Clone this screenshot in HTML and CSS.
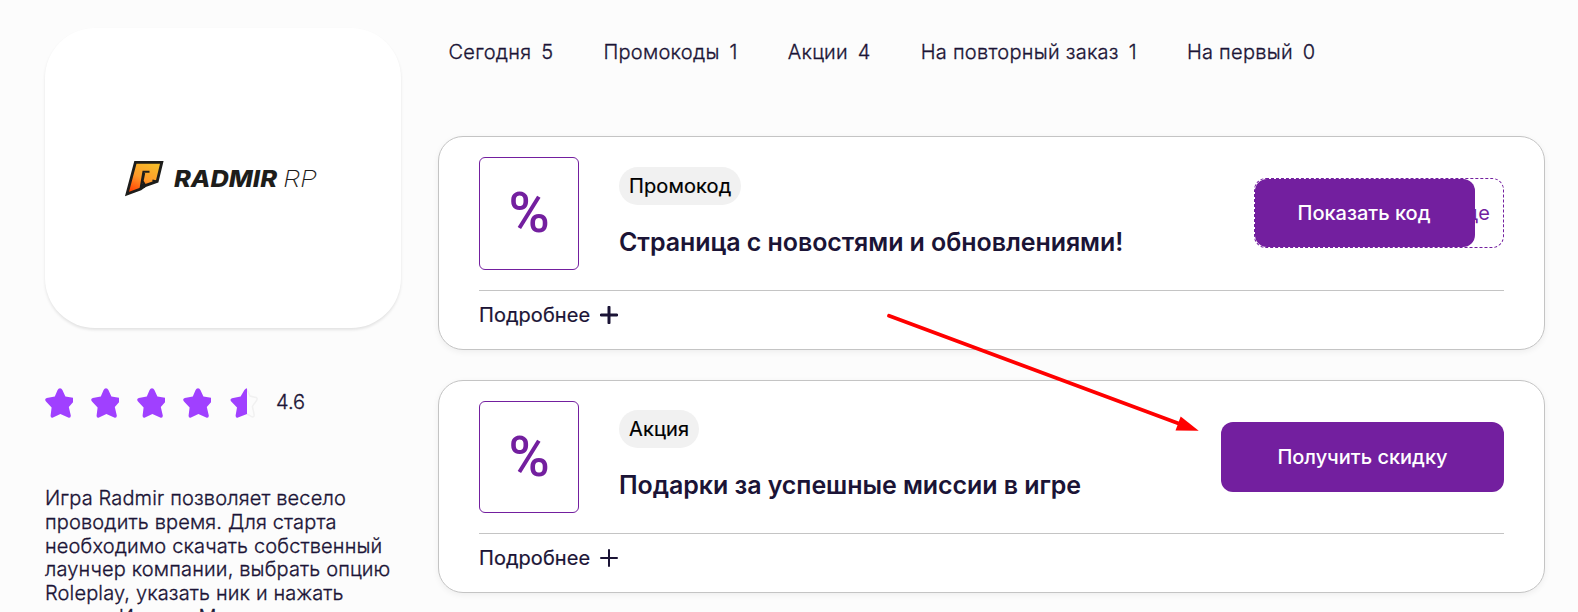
FILE: index.html
```html
<!DOCTYPE html>
<html lang="ru">
<head>
  <meta charset="UTF-8" />
  <meta name="viewport" content="width=device-width, initial-scale=1" />
  <title>Radmir RP</title>
  <link rel="stylesheet" href="styles.css">
</head>
<body>
  <svg class="sprite" width="0" height="0">
    <symbol id="star" viewBox="0 0 28 30">
      <path d="M15 .2 Q16.6 .2 17.4 1.9 L20.4 8.4 L28 9.8 Q31 10.8 29 13.2 L23.8 19 L25.8 27.4 Q26 30.4 23.2 29.6 L15.4 26 L8 29.6 Q5.4 30.4 5.6 27.4 L6.6 19.6 L1 13.4 Q-1 11 1.8 10 L9.8 8.4 L12.6 1.9 Q13.4 .2 15 .2 Z" />
    </symbol>
  </svg>

  <div class="page">
    <aside class="sidebar">
      <div class="shop-logo">
        <svg width="194" height="38" viewBox="124 160 194 38">
          <defs>
            <linearGradient id="gold" x1="0.7" y1="0" x2="0.2" y2="1">
              <stop offset="0" stop-color="#f6bd2a" />
              <stop offset="0.5" stop-color="#ff9a2a" />
              <stop offset="1" stop-color="#ff3c00" />
            </linearGradient>
          </defs>
          <path d="M135.4 162.4 H161.8 L157.2 181.4 L145.2 185.6 L140.5 189 L127 194 Z" fill="url(#gold)" stroke="#1d1d1b" stroke-width="2.8" />
          <path d="M149.5 171.7 H143.4 L140.6 188.2 L143 184.6 L145 187.4 M144.2 173 L142.6 181 L145.8 186.2 M152.4 180.6 L156.8 181.6" fill="none" stroke="#1d1d1b" stroke-width="2" />
          <text class="logo-bold" x="174" y="187" textLength="103" lengthAdjust="spacingAndGlyphs">RADMIR</text>
          <text class="logo-thin" x="283" y="187" textLength="34" lengthAdjust="spacingAndGlyphs">RP</text>
        </svg>
      </div>

      <div class="rating">
        <svg class="star"><use href="#star" /></svg>
        <svg class="star"><use href="#star" /></svg>
        <svg class="star"><use href="#star" /></svg>
        <svg class="star"><use href="#star" /></svg>
        <svg class="star star-half" viewBox="0 0 28 30">
          <path class="star-empty" d="M17 1.5 L20 8 L26 9.4 Q27.8 10.4 26.6 12.4 L22.4 18.4 L24.2 27 Q24.2 29.4 22 28.8 L17 26" />
          <path d="M17 .2 Q15.8 .2 14.4 2 L10.6 8.4 L2 10.2 Q-.4 11 1 13.2 L7 19.4 L5.6 27.4 Q5.6 30.4 8 29.6 L17 26 Z" />
        </svg>
        <span class="rating-value">4.6</span>
      </div>

      <p class="about">Игра Radmir позволяет весело проводить время. Для старта необходимо скачать собственный лаунчер компании, выбрать опцию Roleplay, указать ник и нажать кнопку Играть. Можно</p>
    </aside>

    <main class="content">
      <nav class="tabs">
        <a>Сегодня <span>5</span></a>
        <a>Промокоды <span>1</span></a>
        <a>Акции <span>4</span></a>
        <a>На повторный заказ <span>1</span></a>
        <a>На первый <span>0</span></a>
      </nav>

      <article class="offer">
        <div class="offer-main">
          <div class="percent">%</div>
          <div class="offer-info">
            <span class="tag">Промокод</span>
            <h2>Страница с новостями и обновлениями!</h2>
          </div>
          <div class="code-box">
            <span class="code">где</span>
            <button class="btn btn-code">Показать код</button>
          </div>
        </div>
        <div class="more">
          <span>Подробнее</span>
          <svg class="plus plus-bold" viewBox="0 0 18 18"><path d="M9 1.2V16.8M1.2 9H16.8" /></svg>
        </div>
      </article>

      <article class="offer">
        <div class="offer-main">
          <div class="percent">%</div>
          <div class="offer-info">
            <span class="tag">Акция</span>
            <h2>Подарки за успешные миссии в игре</h2>
          </div>
          <button class="btn btn-deal">Получить скидку</button>
        </div>
        <div class="more">
          <span>Подробнее</span>
          <svg class="plus" viewBox="0 0 18 18"><path d="M9 1V17M1 9H17" /></svg>
        </div>
      </article>
    </main>
  </div>

  <svg class="arrow" width="320" height="124" viewBox="884 311 320 124">
    <path d="M889 315.8 L1180 424" stroke="#f00" stroke-width="3.8" stroke-linecap="round" />
    <path d="M1198.7 430.8 L1180.7 416.5 L1175.5 430.5 Z" fill="#f00" />
  </svg>
</body>
</html>
```

FILE: styles.css
```css
* {
  box-sizing: border-box;
}

body {
  margin: 0;
  height: 612px;
  overflow: hidden;
  background: #fcfcfc;
  color: #1b1436;
  font-family: Inter, "Noto Sans", sans-serif;
  font-size: 20px;
  line-height: 24px;
}

.sprite {
  position: absolute;
}

.page {
  display: flex;
  gap: 37px;
  padding: 28px 33px 0 45px;
}

.sidebar {
  width: 356px;
  flex-shrink: 0;
}

.shop-logo {
  display: flex;
  align-items: center;
  justify-content: center;
  height: 300px;
  padding: 2px 4px 0 0;
  background: #fff;
  border-radius: 50px;
  box-shadow: 0 2px 3px rgba(0, 0, 0, 0.1);
}

.logo-bold {
  font: italic 800 23px Inter, sans-serif;
  fill: #1d1d1b;
}

.logo-thin {
  font: italic 200 23px Inter, sans-serif;
  fill: #1d1d1b;
}

.rating {
  display: flex;
  align-items: center;
  gap: 18px;
  margin-top: 59px;
  height: 32px;
}

.star {
  width: 28px;
  height: 30px;
  fill: #a040ff;
}

.star-half {
  margin-left: 1px;
}

.star-empty {
  fill: #fcfcfc;
  stroke: #f1f1f1;
  stroke-width: 1.5;
}

.rating-value {
  margin-top: -2px;
  font-weight: 300;
  -webkit-text-stroke: 0.3px #1b1436;
}

.about {
  margin: 68px 0 0;
  font-weight: 300;
  letter-spacing: 0.15px;
  line-height: 23.8px;
  -webkit-text-stroke: 0.3px #1b1436;
}

.content {
  flex: 1;
}

.tabs {
  display: flex;
  gap: 50px;
  padding: 12px 0 0 10.5px;
  margin-bottom: 72px;
  font-weight: 300;
  letter-spacing: 0.27px;
  -webkit-text-stroke: 0.3px #1b1436;
}

.tabs span {
  margin-left: 4px;
}

.offer {
  height: 213.5px;
  margin-bottom: 30px;
  padding: 20px 40px;
  background: #fff;
  border: 1px solid #c4c4c4;
  border-radius: 25px;
  box-shadow: 0 2px 6px rgba(0, 0, 0, 0.06);
}

.offer-main {
  display: flex;
  align-items: center;
  height: 133.5px;
  padding-bottom: 20px;
  border-bottom: 1px solid #c4c4c4;
}

.percent {
  display: flex;
  align-items: center;
  justify-content: center;
  width: 100px;
  height: 112.5px;
  border: 1px solid #731f9f;
  border-radius: 6px;
  color: #731f9f;
  font: 500 56px Roboto, sans-serif;
}

.offer-info {
  flex: 1;
  margin: -3px 0 0 40px;
}

.tag {
  display: inline-block;
  padding: 7px 10px;
  border-radius: 20px;
  background: #f1f1f1;
  color: #000;
  letter-spacing: 0.12px;
  -webkit-text-stroke: 0.2px #000;
}

.offer h2 {
  margin: 22px 0 0;
  font-size: 25px;
  line-height: 30px;
  font-weight: 600;
  letter-spacing: -0.07px;
}

.btn {
  height: 70px;
  border: none;
  border-radius: 12px;
  background: #731f9f;
  color: #fff;
  font: 500 20px Inter, sans-serif;
}

.btn-deal {
  width: 283px;
}

.code-box {
  position: relative;
  display: flex;
  align-items: center;
  justify-content: flex-end;
  width: 250px;
  height: 70px;
  padding-right: 13px;
  border: 1px dashed #731f9f;
  border-radius: 12px;
}

.code {
  color: #731f9f;
}

/* covers the code until it is opened */
.btn-code {
  position: absolute;
  top: 0;
  left: 0;
  width: 220px;
  height: 68px;
  padding-right: 8px;
}

.more {
  display: flex;
  align-items: center;
  gap: 10px;
  margin-top: 12px;
  letter-spacing: 0.05px;
  -webkit-text-stroke: 0.2px #1b1436;
}

.plus {
  width: 18px;
  height: 18px;
  stroke: #1b1436;
  stroke-width: 2;
  stroke-linecap: round;
}

.plus-bold {
  stroke-width: 3;
}

.arrow {
  position: absolute;
  left: 884px;
  top: 311px;
}
```
